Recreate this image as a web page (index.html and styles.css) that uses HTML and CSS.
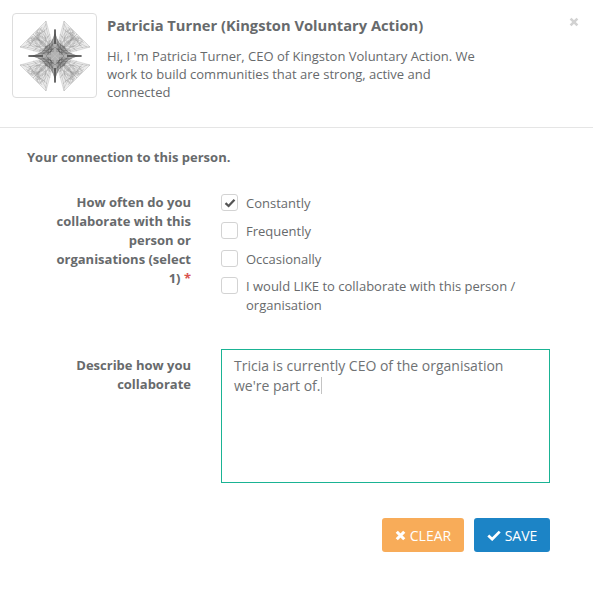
FILE: index.html
```html
<!DOCTYPE html>
<html lang="en">
<head>
<meta charset="utf-8">
<title>Patricia Turner</title>
<link rel="stylesheet" href="styles.css">
</head>
<body>
<div class="modal">
  <header class="head">
    <div class="thumb">
      <svg class="logo" viewBox="-36 -36 72 72" width="72" height="72" aria-hidden="true">
        <defs>
          <g id="h" fill="none" stroke="#8c8c8c" stroke-width=".3">
            <path d="M1 -6L9 -35C13 -31 18 -26 22 -22L9 -9Z" fill="#aaa" fill-opacity=".22" stroke="#9a9a9a"/>
            <path d="M1 -9C6 -16 10 -28 9 -35"/>
            <path d="M3 -6C9 -14 11 -23 15 -28C19 -26 19 -18 13 -12"/>
            <path d="M5 -6C5 -16 10 -28 17 -26C22 -23 18 -11 5 -6"/>
            <path d="M7 -7C7 -15 11 -24 16 -23C20 -21 16 -11 7 -7"/>
            <path d="M9 -9C9 -16 11 -20 14 -20C18 -19 15 -12 9 -9"/>
            <path d="M12 -12C11 -18 13 -24 19 -24"/>
            <path d="M8 -28C11 -23 16 -22 21 -18"/>
            <path d="M9 -32C12 -26 15 -22 19 -16"/>
            <path d="M13 -17C16 -18 18 -22 13 -29"/>
            <path d="M15 -15C19 -21 14 -25 10 -25"/>
            <path d="M7 -20C11 -16 13 -18 18 -24"/>
            <path d="M6 -14C10 -14 14 -20 20 -23"/>
            <path d="M5 -22C8 -17 11 -14 16 -13"/>
            <path d="M11 -27C9 -21 9 -15 11 -11"/>
          </g>
          <g id="c">
            <path d="M0 0L0 -25C2 -15 5 -10 10 -10Z" fill="#666" fill-opacity=".5" stroke="none"/>
            <path d="M0 -22C3 -13 7 -8 16 -5M0 -15C3 -10 6 -6 12 -3M0 -9C2 -7 4 -4 8 -2M2 -17L4 -4M5 -13L7 -2M1 -5L9 -4" fill="none" stroke="#444" stroke-width=".32"/>
            <path d="M-.6 -26.5L.6 -26.5L.6 -12L-.6 -12Z" fill="#4d4d4d"/>
          </g>
          <g id="q"><use href="#h"/><use href="#h" transform="matrix(0 -1 -1 0 0 0)"/><use href="#c"/><use href="#c" transform="matrix(0 -1 -1 0 0 0)"/></g>
        </defs>
        <use href="#q"/><use href="#q" transform="scale(-1 1)"/><use href="#q" transform="scale(1 -1)"/><use href="#q" transform="scale(-1 -1)"/>
      </svg>
    </div>
    <div class="intro">
      <h1 class="name">Patricia Turner (Kingston Voluntary Action)</h1>
      <p class="bio">Hi, I 'm Patricia Turner, CEO of Kingston Voluntary Action. We work to build communities that are strong, active and connected</p>
    </div>
    <svg class="close" viewBox="0 0 10 10" width="10" height="10" aria-hidden="true"><path d="M1.6 1.6L8.4 8.4M8.4 1.6L1.6 8.4" stroke="#d2d2d2" stroke-width="2.6" fill="none"/></svg>
  </header>
  <main class="body">
    <h2 class="section">Your connection to this person.</h2>
    <div class="row row-often">
      <div class="label">How often do you collaborate with this person or organisations (select 1) <span class="req">*</span></div>
      <div class="options">
        <label class="opt"><span class="box"><svg viewBox="0 0 12 10" width="12" height="10" aria-hidden="true"><path d="M1.5 5.2L4.6 8L10.5 1.8" stroke="#555" stroke-width="2.3" fill="none"/></svg></span><span>Constantly</span></label>
        <label class="opt"><span class="box"></span><span>Frequently</span></label>
        <label class="opt"><span class="box"></span><span>Occasionally</span></label>
        <label class="opt opt-long"><span class="box"></span><span>I would LIKE to collaborate with this person / organisation</span></label>
      </div>
    </div>
    <div class="row row-desc">
      <div class="label label-desc">Describe how you collaborate</div>
      <div class="textarea">Tricia is currently CEO of the organisation we're part of.<span class="caret"></span></div>
    </div>
    <div class="actions">
      <button class="btn btn-clear" type="button"><svg viewBox="0 0 10 10" width="11" height="11" aria-hidden="true"><path d="M1.6 1.6L8.4 8.4M8.4 1.6L1.6 8.4" stroke="#fff" stroke-width="2.8" fill="none"/></svg>CLEAR</button>
      <button class="btn btn-save" type="button"><svg viewBox="0 0 13 10" width="14" height="11" aria-hidden="true"><path d="M1.2 5L4.8 8.4L11.8 1.4" stroke="#fff" stroke-width="2.6" fill="none"/></svg>SAVE</button>
    </div>
  </main>
</div>
</body>
</html>
```
FILE: styles.css
```css
* { box-sizing: border-box; }
html, body { margin: 0; padding: 0; background: #fff; }
body { font-family: "Open Sans", "Liberation Sans", sans-serif; font-size: 13px; line-height: 19px; color: #676a6c; }
.modal { width: 593px; height: 595px; overflow: hidden; }
.head { position: relative; display: flex; gap: 10px; height: 128px; padding: 13px 0 0 12px; border-bottom: 1px solid #e5e5e5; }
.thumb { width: 85px; height: 85px; flex: none; border: 1px solid #ddd; border-radius: 4px; display: flex; align-items: center; justify-content: center; }
.logo { display: block; }
.intro { width: 375px; padding-top: 2px; }
.name { margin: 0 0 11px; font-size: 14.7px; line-height: 21px; font-weight: 700; color: #676a6c; }
.bio { margin: 0; line-height: 18px; }
.close { position: absolute; top: 17px; right: 14px; }
.body { padding: 20px 43px 0 27px; }
.section { margin: 0; font-size: 13px; line-height: 19px; font-weight: 700; }
.row { display: flex; gap: 30px; }
.row-often { margin-top: 26px; }
.row-desc { margin-top: 34px; }
.label { width: 140px; margin-left: 24px; flex: none; text-align: right; font-weight: 700; font-size: 13px; line-height: 19px; }
.label-desc { padding-top: 7px; }
.req { color: #d9534f; }
.options { display: flex; flex-direction: column; gap: 9px; width: 305px; padding-top: 1px; }
.opt { display: flex; gap: 8px; align-items: flex-start; }
.opt-long { margin-top: -1px; }
.box { width: 17px; height: 17px; flex: none; border: 1px solid #d3d3d3; border-radius: 3px; display: flex; align-items: center; justify-content: center; }
.textarea { width: 329px; height: 134px; border: 1px solid #1ab394; padding: 6px 12px; font-size: 14px; line-height: 20px; color: #6f7274; }
.caret { display: inline-block; width: 1px; height: 17px; background: #c4c4c4; vertical-align: -3px; }
.actions { display: flex; justify-content: flex-end; gap: 10px; margin-top: 35px; }
.btn { display: flex; align-items: center; justify-content: center; gap: 4px; height: 34px; border: 0; border-radius: 3px; color: #fff; font: 400 14px "Open Sans", "Liberation Sans", sans-serif; padding: 0; }
.btn-clear { width: 82px; background: #f8ac59; }
.btn-save { width: 76px; background: #1c84c6; }
```
